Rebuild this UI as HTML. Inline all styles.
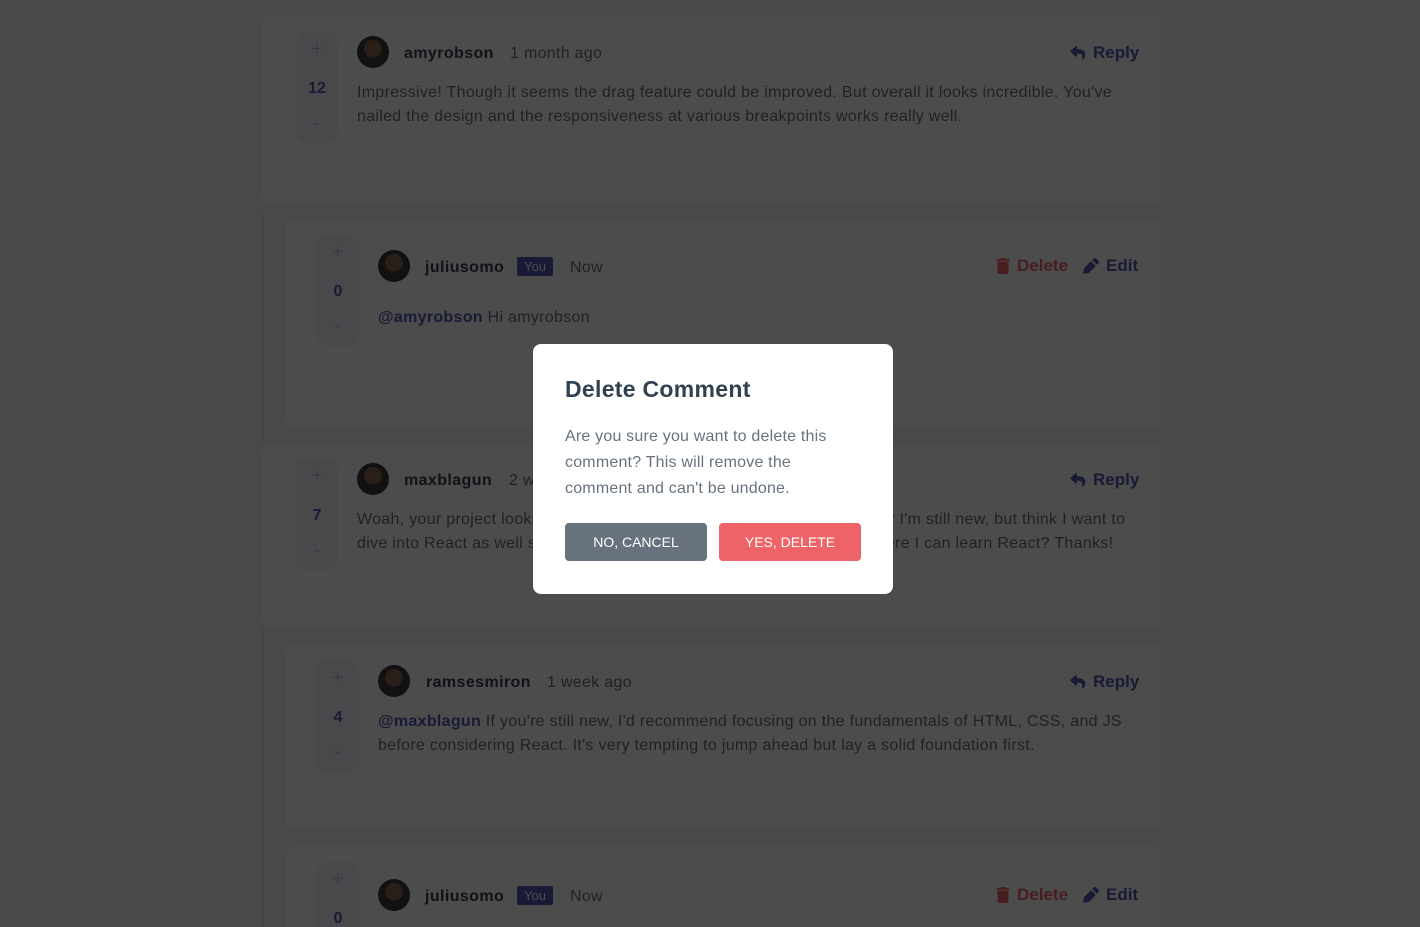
<!DOCTYPE html>
<html><head><meta charset="utf-8"><style>
*{box-sizing:border-box;margin:0;padding:0}
html,body{width:1420px;height:927px;overflow:hidden}
body{background:#f5f6fa;font-family:"Liberation Sans",sans-serif;position:relative}
.card{position:absolute;background:#fff;border-radius:8px}
.vote{position:absolute;left:34px;top:16px;width:42px;height:111px;background:#f5f6fa;border-radius:10px;text-align:center;color:#c5c6ef;font-size:20px}
.vote .p{position:absolute;top:6px;left:0;right:0}
.vote .n{position:absolute;top:48px;left:0;right:0;color:#5357b6;font-weight:bold;font-size:16px}
.vote .m{position:absolute;top:80px;left:0;right:0}
.av{position:absolute;left:95px;top:20px;width:32px;height:32px;border-radius:50%;background:radial-gradient(circle at 50% 40%,#8a6a50 0 35%,#3a3a3a 36%)}
.name{position:absolute;left:142px;top:29px;font-weight:bold;color:#324152;font-size:16px;letter-spacing:.4px}
.time{position:absolute;top:29px;color:#67727e;font-size:16px;letter-spacing:.3px}
.you{position:absolute;top:28px;background:#5357b6;color:#fff;font-size:13px;padding:2px 7px;border-radius:2px}
.txt{position:absolute;left:95px;top:65px;width:770px;color:#67727e;font-size:16px;line-height:24px;letter-spacing:.3px}
.at{color:#5357b6;font-weight:bold}
.act{position:absolute;top:27px;font-weight:bold;font-size:17px;color:#5357b6;display:flex;align-items:center;gap:7px}
.del{color:#ed6368}
.line{position:absolute;left:262px;width:2px;background:#e9ebf0}
.ov{position:absolute;left:0;top:0;width:1420px;height:927px;background:rgba(0,0,0,.7)}
.modal{position:absolute;left:533px;top:344px;width:360px;height:250px;background:#fff;border-radius:8px}
.modal h2{position:absolute;left:32px;top:32px;font-size:23px;color:#324152;letter-spacing:.3px}
.modal p{position:absolute;left:32px;top:80px;width:290px;font-size:16px;line-height:26px;color:#67727e;letter-spacing:.2px}
.btn{position:absolute;top:179px;width:142px;height:38px;border-radius:4px;color:#fff;font-size:14px;text-align:center;line-height:38px}
</style></head><body>
<div class="line" style="top:210px;height:717px"></div>

<div class="card" style="left:262px;top:16px;width:899px;height:187px">
<div class="vote"><div class="p">+</div><div class="n">12</div><div class="m">-</div></div>
<div class="av"></div><div class="name">amyrobson</div><div class="time" style="left:248px">1 month ago</div>
<div class="act" style="left:808px"><svg width="16" height="14" viewBox="0 0 14 13"><path d="M.2 4.3 5 .1c.4-.4 1-.1 1 .5v2.3c4.3.1 7.8 1 7.8 5.3 0 1.7-1.1 3.4-2.3 4.3-.4.3-.9-.1-.8-.5 1.2-3.9-.6-4.9-4.7-5v2.4c0 .6-.6.9-1 .5L.2 5.6c-.3-.4-.3-1 0-1.3z" fill="#5357b6"/></svg>Reply</div>
<div class="txt">Impressive! Though it seems the drag feature could be improved. But overall it looks incredible. You've nailed the design and the responsiveness at various breakpoints works really well.</div>
</div>

<div class="card" style="left:286px;top:219px;width:875px;height:208px">
<div class="vote" style="left:31px"><div class="p">+</div><div class="n">0</div><div class="m">-</div></div>
<div class="av" style="left:92px;top:31px"></div><div class="name" style="left:139px;top:40px">juliusomo</div><div class="you" style="left:231px;top:38px">You</div><div class="time" style="left:284px;top:40px">Now</div>
<div class="act del" style="left:710px;top:37px"><svg width="14" height="16" viewBox="0 0 12 14"><path d="M1.2 12.4c0 .9.7 1.6 1.6 1.6h6.4c.9 0 1.6-.7 1.6-1.6V3.1H1.2zM11.4.8H8.4L7.5 0H4.5l-.9.8H.6v1.6h10.8z" fill="#ed6368"/></svg>Delete</div>
<div class="act" style="left:797px;top:37px"><svg width="16" height="16" viewBox="0 0 14 14"><path d="M13.5 2.5 11.5.5c-.6-.6-1.6-.6-2.2 0L8 1.8l4.2 4.2 1.3-1.3c.6-.6.6-1.6 0-2.2zM7 2.8 1 8.8.1 13.4c-.1.3.2.6.5.5L5.2 13 11.2 7z" fill="#5357b6"/></svg>Edit</div>
<div class="txt" style="left:92px;top:87px"><span class="at">@amyrobson</span> Hi amyrobson</div>
</div>

<div class="card" style="left:262px;top:443px;width:899px;height:185px">
<div class="vote"><div class="p">+</div><div class="n">7</div><div class="m">-</div></div>
<div class="av"></div><div class="name">maxblagun</div><div class="time" style="left:247px">2 weeks ago</div>
<div class="act" style="left:808px"><svg width="16" height="14" viewBox="0 0 14 13"><path d="M.2 4.3 5 .1c.4-.4 1-.1 1 .5v2.3c4.3.1 7.8 1 7.8 5.3 0 1.7-1.1 3.4-2.3 4.3-.4.3-.9-.1-.8-.5 1.2-3.9-.6-4.9-4.7-5v2.4c0 .6-.6.9-1 .5L.2 5.6c-.3-.4-.3-1 0-1.3z" fill="#5357b6"/></svg>Reply</div>
<div class="txt">Woah, your project looks awesome! How long have you been coding for? I'm still new, but think I want to dive into React as well soon. Perhaps you can give me an insight on where I can learn React? Thanks!</div>
</div>

<div class="card" style="left:286px;top:645px;width:875px;height:184px">
<div class="vote" style="left:31px"><div class="p">+</div><div class="n">4</div><div class="m">-</div></div>
<div class="av" style="left:92px"></div><div class="name" style="left:140px">ramsesmiron</div><div class="time" style="left:261px">1 week ago</div>
<div class="act" style="left:784px"><svg width="16" height="14" viewBox="0 0 14 13"><path d="M.2 4.3 5 .1c.4-.4 1-.1 1 .5v2.3c4.3.1 7.8 1 7.8 5.3 0 1.7-1.1 3.4-2.3 4.3-.4.3-.9-.1-.8-.5 1.2-3.9-.6-4.9-4.7-5v2.4c0 .6-.6.9-1 .5L.2 5.6c-.3-.4-.3-1 0-1.3z" fill="#5357b6"/></svg>Reply</div>
<div class="txt" style="left:92px;width:750px"><span class="at">@maxblagun</span> If you're still new, I'd recommend focusing on the fundamentals of HTML, CSS, and JS before considering React. It's very tempting to jump ahead but lay a solid foundation first.</div>
</div>

<div class="card" style="left:286px;top:846px;width:875px;height:81px;border-radius:8px 8px 0 0;overflow:hidden">
<div class="vote" style="left:31px"><div class="p">+</div><div class="n">0</div><div class="m">-</div></div>
<div class="av" style="left:92px;top:33px"></div><div class="name" style="left:139px;top:42px">juliusomo</div><div class="you" style="left:231px;top:40px">You</div><div class="time" style="left:284px;top:42px">Now</div>
<div class="act del" style="left:710px;top:39px"><svg width="14" height="16" viewBox="0 0 12 14"><path d="M1.2 12.4c0 .9.7 1.6 1.6 1.6h6.4c.9 0 1.6-.7 1.6-1.6V3.1H1.2zM11.4.8H8.4L7.5 0H4.5l-.9.8H.6v1.6h10.8z" fill="#ed6368"/></svg>Delete</div>
<div class="act" style="left:797px;top:39px"><svg width="16" height="16" viewBox="0 0 14 14"><path d="M13.5 2.5 11.5.5c-.6-.6-1.6-.6-2.2 0L8 1.8l4.2 4.2 1.3-1.3c.6-.6.6-1.6 0-2.2zM7 2.8 1 8.8.1 13.4c-.1.3.2.6.5.5L5.2 13 11.2 7z" fill="#5357b6"/></svg>Edit</div>
</div>

<div class="ov"></div>
<div class="modal">
<h2>Delete Comment</h2>
<p>Are you sure you want to delete this comment? This will remove the comment and can't be undone.</p>
<div class="btn" style="left:32px;background:#67727e">NO, CANCEL</div>
<div class="btn" style="left:186px;background:#ed6368">YES, DELETE</div>
</div>
</body></html>
